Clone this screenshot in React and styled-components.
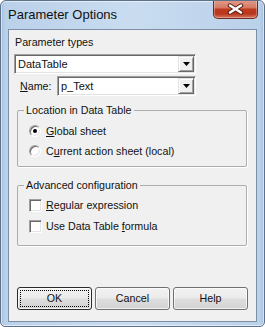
import React from 'react';
import styled, { createGlobalStyle } from 'styled-components';

const GlobalStyle = createGlobalStyle`
  html, body {
    margin: 0;
    padding: 0;
    background: #ffffff;
  }
  body {
    font-family: 'Liberation Sans', Arial, sans-serif;
    color: #000;
  }
`;

const Window = styled.div`
  width: 265px;
  height: 327px;
  box-sizing: border-box;
  display: flex;
  flex-direction: column;
  border: 1px solid #5d7189;
  border-radius: 6px 6px 5px 5px;
  background: linear-gradient(90deg, #a3bedd 0, #bad1ea 4px, #c9dcf0 50%, #bad1ea calc(100% - 4px), #a3bedd 100%);
  box-shadow: inset 0 0 0 1px rgba(255, 255, 255, 0.55);
  overflow: hidden;
`;

const TitleBar = styled.div`
  height: 28px;
  flex: none;
  display: flex;
  justify-content: space-between;
  align-items: flex-start;
`;

const Title = styled.div`
  padding: 6px 0 0 7px;
  font-size: 13px;
  line-height: 16px;
  color: #111;
`;

const CloseButton = styled.div`
  width: 45px;
  height: 19px;
  margin: -1px 6px 0 0;
  box-sizing: border-box;
  border: 1px solid #6a2c20;
  border-top: none;
  border-radius: 0 0 5px 5px;
  background: linear-gradient(180deg, #e49d8d 0%, #d57a64 42%, #bf391f 52%, #b9361d 76%, #d77560 100%);
  box-shadow: inset 0 0 0 1px rgba(255, 255, 255, 0.3);
  display: flex;
  align-items: center;
  justify-content: center;
`;

const Client = styled.div`
  flex: 1;
  margin: 0 7px 4px;
  border: 1px solid #7d8fa5;
  background: #f0f0f0;
  display: flex;
  flex-direction: column;
  font-size: 10.7px;
  line-height: 13px;
  color: #111;
`;

const Label = styled.div`
  margin: 6px 0 0 6px;
`;

const ComboBox = styled.div`
  width: ${({ width }) => width}px;
  height: 20px;
  box-sizing: border-box;
  margin: ${({ margin }) => margin || 0};
  display: flex;
  padding: 1px;
  border: 1px solid;
  border-color: #a0a0a0 #ffffff #ffffff #a0a0a0;
  box-shadow: inset 1px 1px 0 #696969, inset -1px -1px 0 #e3e3e3;
  background: #ffffff;
`;

const ComboValue = styled.div`
  flex: 1;
  padding-left: 2px;
  display: flex;
  align-items: center;
  font-size: 11px;
`;

const DropButton = styled.div`
  width: 16px;
  box-sizing: border-box;
  border: 1px solid;
  border-color: #e3e3e3 #696969 #696969 #e3e3e3;
  box-shadow: inset 1px 1px 0 #ffffff, inset -1px -1px 0 #a0a0a0;
  background: #f0f0f0;
  display: flex;
  align-items: center;
  justify-content: center;
`;

const NameRow = styled.div`
  display: flex;
  align-items: center;
  margin: 2px 0 0 11px;
`;

const NameLabel = styled.div`
  width: 37px;
`;

const Group = styled.fieldset`
  width: 230px;
  box-sizing: border-box;
  margin: ${({ top }) => top}px 0 0 8px;
  padding: 0 0 ${({ bottom }) => bottom}px 0;
  border: 1px solid #adadad;
  border-radius: 2px;
  box-shadow: 1px 1px 0 #ffffff;
  min-width: 0;
`;

const Legend = styled.legend`
  margin-left: 6px;
  padding: 0 2px;
  line-height: 13px;
`;

const OptionRow = styled.div`
  height: 16px;
  display: flex;
  align-items: center;
  gap: ${({ gap }) => gap}px;
  margin: ${({ top }) => top}px 0 0 11px;
`;

const Radio = styled.span`
  width: 12px;
  height: 12px;
  box-sizing: border-box;
  border-radius: 50%;
  border: 1px solid;
  border-color: #a0a0a0 #ffffff #ffffff #a0a0a0;
  box-shadow: inset 1px 1px 0 #696969, inset -1px -1px 0 #e3e3e3;
  background: #ffffff;
  display: flex;
  align-items: center;
  justify-content: center;
  &::after {
    content: '';
    width: 4px;
    height: 4px;
    border-radius: 50%;
    background: ${({ checked }) => (checked ? '#000' : 'transparent')};
  }
`;

const CheckBox = styled.span`
  width: 13px;
  height: 13px;
  box-sizing: border-box;
  border: 1px solid;
  border-color: #a0a0a0 #ffffff #ffffff #a0a0a0;
  box-shadow: inset 1px 1px 0 #696969, inset -1px -1px 0 #e3e3e3;
  background: #ffffff;
`;

const ButtonRow = styled.div`
  margin: auto 0 11px 8px;
  display: flex;
  gap: 3px;
`;

const Button = styled.div`
  width: 75px;
  height: 23px;
  box-sizing: border-box;
  padding: 2px;
  display: flex;
  border: 1px solid ${({ primary }) => (primary ? '#2b2b2b' : '#707070')};
  border-radius: 3px;
  background: linear-gradient(180deg, #f2f2f2 0%, #ebebeb 48%, #dddddd 52%, #d3d3d3 100%);
  box-shadow: inset 0 0 0 1px rgba(255, 255, 255, 0.7);
`;

const ButtonText = styled.div`
  flex: 1;
  display: flex;
  align-items: center;
  justify-content: center;
  border: 1px dotted ${({ focused }) => (focused ? '#000' : 'transparent')};
`;

const Arrow = () => (
  <svg width="7" height="4" viewBox="0 0 7 4">
    <polygon points="0,0 7,0 3.5,4" fill="#000" />
  </svg>
);

const Combo = ({ value, width, margin }) => (
  <ComboBox width={width} margin={margin}>
    <ComboValue>{value}</ComboValue>
    <DropButton>
      <Arrow />
    </DropButton>
  </ComboBox>
);

export default function App() {
  return (
    <>
      <GlobalStyle />
      <Window>
        <TitleBar>
          <Title>Parameter Options</Title>
          <CloseButton>
            <svg width="17" height="12" viewBox="0 0 17 12">
              <path d="M3 2.5 L14 9.5 M14 2.5 L3 9.5" stroke="#5a2218" strokeWidth="4.4" strokeLinecap="round" />
              <path d="M3 2.5 L14 9.5 M14 2.5 L3 9.5" stroke="#ffffff" strokeWidth="2.4" strokeLinecap="round" />
            </svg>
          </CloseButton>
        </TitleBar>
        <Client>
          <Label>Parameter types</Label>
          <Combo value="DataTable" width={182} margin="5px 0 0 5px" />
          <NameRow>
            <NameLabel>
              <u>N</u>ame:
            </NameLabel>
            <Combo value="p_Text" width={139} />
          </NameRow>

          <Group top={8} bottom={7}>
            <Legend>Location in Data Table</Legend>
            <OptionRow top={6} gap={5}>
              <Radio checked />
              <span>
                <u>G</u>lobal sheet
              </span>
            </OptionRow>
            <OptionRow top={4} gap={5}>
              <Radio />
              <span>
                C<u>u</u>rrent action sheet (local)
              </span>
            </OptionRow>
          </Group>

          <Group top={12} bottom={11}>
            <Legend>Advanced configuration</Legend>
            <OptionRow top={5} gap={4}>
              <CheckBox />
              <span>
                <u>R</u>egular expression
              </span>
            </OptionRow>
            <OptionRow top={5} gap={4}>
              <CheckBox />
              <span>
                Use Data Table <u>f</u>ormula
              </span>
            </OptionRow>
          </Group>

          <ButtonRow>
            <Button primary>
              <ButtonText focused>OK</ButtonText>
            </Button>
            <Button>
              <ButtonText>Cancel</ButtonText>
            </Button>
            <Button>
              <ButtonText>Help</ButtonText>
            </Button>
          </ButtonRow>
        </Client>
      </Window>
    </>
  );
}
